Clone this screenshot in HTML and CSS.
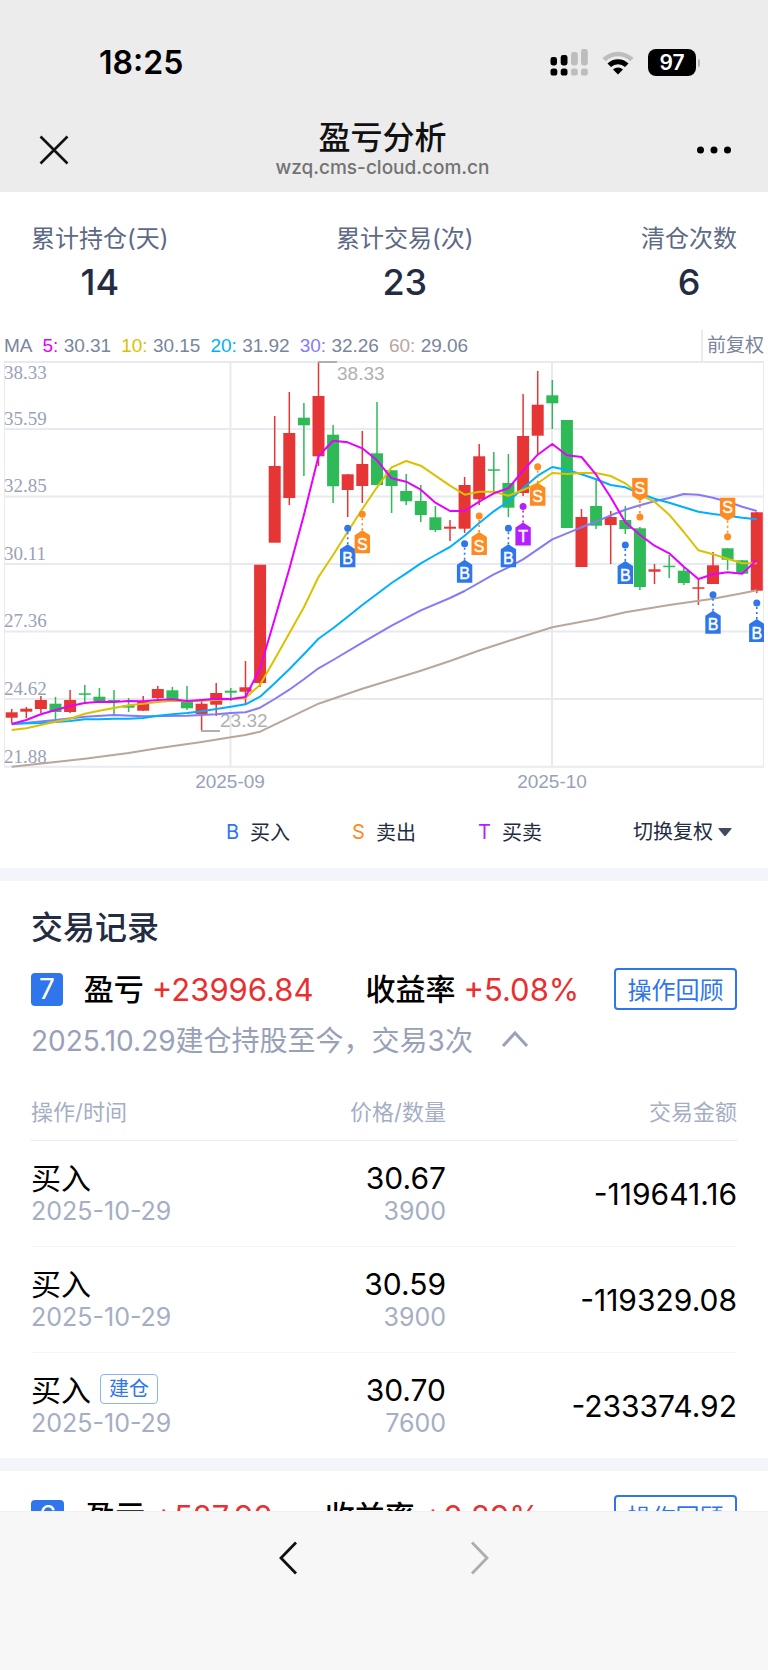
FILE: index.html
```
<!DOCTYPE html>
<html lang="zh-CN">
<head>
    <meta charset="utf-8">
    <meta name="viewport" content="width=device-width, initial-scale=1">
    <title>盈亏分析</title>
    <link rel="stylesheet" href="styles.css">
</head>
<body>
    <header class="header">
        <div class="status-bar">
            <span class="time">18:25</span>
            <div class="status-icons">
                <svg width="40" height="28" viewBox="0 0 40 28">
                    <rect x="0.5" y="8" width="6.5" height="8.5" rx="2.4"/>
                    <rect x="10.7" y="6" width="6.8" height="10.5" rx="2.4"/>
                    <g fill="#bdbdbd">
                        <rect x="21" y="3" width="6.8" height="13.5" rx="2.4"/>
                        <rect x="31" y="0" width="6.8" height="16.5" rx="2.4"/>
                        <rect x="21" y="19.5" width="6.8" height="7" rx="2.6"/>
                        <rect x="31" y="19.5" width="6.8" height="7" rx="2.6"/>
                    </g>
                    <rect x="0.5" y="19.5" width="6.8" height="7" rx="2.6"/>
                    <rect x="10.7" y="19.5" width="6.8" height="7" rx="2.6"/>
                </svg>
                <svg width="32" height="24" viewBox="0 0 32 24">
                    <path d="M0.5 7 A22.5 22.5 0 0 1 31.5 7 L28.3 10.2 A18 18 0 0 0 3.7 10.2 Z" fill="#bdbdbd"/>
                    <path d="M5.5 12.5 A15 15 0 0 1 26.5 12.5 L23 16 A10 10 0 0 0 9 16 Z"/>
                    <path d="M11 18.5 A7.4 7.4 0 0 1 21 18.5 L16 23.6 Z"/>
                </svg>
                <div class="battery"><span class="battery-level">97</span></div>
            </div>
        </div>
        <div class="nav-bar">
            <button class="icon-button" aria-label="关闭">
                <svg width="30" height="30" viewBox="0 0 30 30"><path d="M1.5 1.5 L28.5 28.5 M28.5 1.5 L1.5 28.5" fill="none" stroke="#111" stroke-width="2.6"/></svg>
            </button>
            <div class="nav-title">
                <h1>盈亏分析</h1>
                <p>wzq.cms-cloud.com.cn</p>
            </div>
            <button class="icon-button" aria-label="更多">
                <svg width="36" height="10" viewBox="0 0 36 10"><circle cx="4.5" cy="5" r="3.5"/><circle cx="18" cy="5" r="3.5"/><circle cx="31.5" cy="5" r="3.5"/></svg>
            </button>
        </div>
    </header>

    <main class="content">
        <section class="stats">
            <div class="stat"><span class="stat-label">累计持仓(天)</span><span class="stat-value">14</span></div>
            <div class="stat"><span class="stat-label">累计交易(次)</span><span class="stat-value">23</span></div>
            <div class="stat"><span class="stat-label">清仓次数</span><span class="stat-value">6</span></div>
        </section>

        <section class="chart">
            <div class="ma-row">
                <span>MA</span>
                <span><b class="ma5">5:</b> 30.31</span>
                <span><b class="ma10">10:</b> 30.15</span>
                <span><b class="ma20">20:</b> 31.92</span>
                <span><b class="ma30">30:</b> 32.26</span>
                <span><b class="ma60">60:</b> 29.06</span>
                <span class="adjust">前复权</span>
            </div>
            <svg id="kline" class="kline" viewBox="0 361 768 434"></svg>
            <div class="legend">
                <span class="legend-item"><i class="buy">B</i>买入</span>
                <span class="legend-item"><i class="sell">S</i>卖出</span>
                <span class="legend-item"><i class="both">T</i>买卖</span>
                <label class="switch">
                    <select aria-label="切换复权"><option>切换复权</option></select>
                    <svg width="14" height="8" viewBox="0 0 14 8"><path d="M1 0 H13 Q14 0 13.4 1 L8 7.4 Q7 8.4 6 7.4 L0.6 1 Q0 0 1 0 Z" fill="#404b60"/></svg>
                </label>
            </div>
        </section>

        <section class="records">
            <h2>交易记录</h2>
            <div class="record-head">
                <span class="badge">7</span>
                <span class="name">盈亏</span>
                <span class="profit">+23996.84</span>
                <span class="name rate">收益率</span>
                <span class="profit">+5.08%</span>
                <button class="review">操作回顾</button>
            </div>
            <button class="summary">
                <span>2025.10.29建仓持股至今，交易3次</span>
                <svg width="28" height="18" viewBox="0 0 28 18"><path d="M2 16 L14 3 L26 16" fill="none" stroke="#98a1b7" stroke-width="3"/></svg>
            </button>
            <table class="trades">
                <thead>
                    <tr><th class="col-op">操作/时间</th><th class="col-price">价格/数量</th><th class="col-amount">交易金额</th></tr>
                </thead>
                <tbody>
                    <tr>
                        <td><div class="main">买入</div><div class="sub">2025-10-29</div></td>
                        <td><div class="main">30.67</div><div class="sub">3900</div></td>
                        <td class="amount">-119641.16</td>
                    </tr>
                    <tr>
                        <td><div class="main">买入</div><div class="sub">2025-10-29</div></td>
                        <td><div class="main">30.59</div><div class="sub">3900</div></td>
                        <td class="amount">-119329.08</td>
                    </tr>
                    <tr>
                        <td><div class="main">买入<span class="tag">建仓</span></div><div class="sub">2025-10-29</div></td>
                        <td><div class="main">30.70</div><div class="sub">7600</div></td>
                        <td class="amount">-233374.92</td>
                    </tr>
                </tbody>
            </table>
        </section>

        <section class="records next">
            <div class="record-head">
                <span class="badge">6</span>
                <span class="name">盈亏</span>
                <span class="profit">+527.90</span>
                <span class="name rate">收益率</span>
                <span class="profit">+0.29%</span>
                <button class="review">操作回顾</button>
            </div>
        </section>
    </main>

    <footer class="toolbar">
        <button class="icon-button" aria-label="后退">
            <svg width="20" height="34" viewBox="0 0 20 34"><path d="M18 1.5 L3 17 L18 32.5" fill="none" stroke="#111" stroke-width="2.8"/></svg>
        </button>
        <button class="icon-button" aria-label="前进">
            <svg width="20" height="34" viewBox="0 0 20 34"><path d="M2 1.5 L17 17 L2 32.5" fill="none" stroke="#adadad" stroke-width="2.8"/></svg>
        </button>
    </footer>

    <script src="kline.js"></script>
</body>
</html>
```

FILE: styles.css
```
* {
    box-sizing: border-box;
}

body {
    margin: 0;
    height: 100vh;
    display: flex;
    flex-direction: column;
    background: #fff;
    color: #000;
    font-family: Inter, "Noto Sans CJK SC", sans-serif;
}

h1, h2, p {
    margin: 0;
}

button {
    padding: 0;
    border: none;
    background: none;
    font-family: inherit;
    cursor: pointer;
}

svg {
    display: block;
}

/* header */
.header {
    flex: none;
    height: 192px;
    background: #ececec;
}

.status-bar {
    display: flex;
    justify-content: space-between;
    align-items: center;
    height: 125px;
    padding: 0 68px 0 99px;
}

.time {
    font-size: 32px;
    font-weight: 600;
}

.status-icons {
    display: flex;
    align-items: center;
    gap: 12px;
}

.battery {
    display: flex;
    align-items: center;
    gap: 2px;
    padding-left: 2px;
}

.battery-level {
    width: 48px;
    height: 27px;
    border-radius: 8px;
    background: #000;
    color: #fff;
    font-size: 21px;
    line-height: 27px;
    font-weight: 600;
    text-align: center;
}

.battery::after {
    content: "";
    width: 2px;
    height: 8px;
    border-radius: 0 2px 2px 0;
    background: #b5b5b5;
}

.nav-bar {
    display: flex;
    justify-content: space-between;
    align-items: center;
    height: 50px;
    padding: 0 36px 0 39px;
}

.nav-title {
    text-align: center;
}

.nav-title h1 {
    font-size: 32px;
    line-height: 36px;
    font-weight: 500;
    color: #111;
}

.nav-title p {
    font-size: 19px;
    line-height: 24px;
    font-weight: 500;
    color: #737373;
}

/* scrolling content */
.content {
    flex: 1;
    min-height: 0;
    overflow-y: auto;
    scrollbar-width: none;
}

.stats {
    display: flex;
    justify-content: space-between;
    padding: 29px 31px 0;
}

.stat {
    display: flex;
    flex-direction: column;
    align-items: center;
}

.stat-label {
    font-size: 24px;
    line-height: 36px;
    color: #5d6985;
}

.stat-value {
    font-size: 36px;
    line-height: 50px;
    font-weight: 500;
    color: #232c41;
}

/* chart */
.chart {
    border-bottom: 13px solid #f4f5fa;
}

.ma-row {
    display: flex;
    align-items: center;
    gap: 10px;
    height: 31px;
    margin-top: 23px;
    padding: 0 4px;
    font-family: "Liberation Sans", "Noto Sans CJK SC", sans-serif;
    font-size: 19px;
    line-height: 31px;
    color: #7a859d;
}

.ma-row b {
    font-weight: normal;
}

.ma-row .ma5 { color: #e600ff; }
.ma-row .ma10 { color: #dcc100; }
.ma-row .ma20 { color: #00b0ff; }
.ma-row .ma30 { color: #857bf8; }
.ma-row .ma60 { color: #b9a69d; }

.adjust {
    margin-left: auto;
    padding-left: 4px;
    border-left: 2px solid #e9eaf0;
}

.kline {
    width: 100%;
}

.kline .axis {
    font: 19px "Liberation Serif", serif;
    fill: #98a2b8;
}

.kline .date,
.kline .extreme {
    font: 19px "Liberation Sans", sans-serif;
    fill: #98a2b8;
}

.kline .date {
    text-anchor: middle;
}

.kline .extreme {
    fill: #b0b0b0;
}

.kline .flag {
    font: 16px "Liberation Sans", sans-serif;
    fill: #fff;
    stroke: #fff;
    stroke-width: 0.4px;
    text-anchor: middle;
}

.legend {
    display: flex;
    justify-content: flex-end;
    align-items: center;
    gap: 62px;
    height: 73px;
    padding-right: 36px;
    font-size: 20px;
    color: #232c41;
}

.legend-item {
    display: flex;
    align-items: center;
}

.legend-item i {
    width: 24px;
    font-style: normal;
}

.buy { color: #2f76ec; }
.sell { color: #ff8a1f; }
.both { color: #b41fff; }

.switch {
    display: flex;
    align-items: center;
    gap: 5px;
    margin-left: 29px;
}

.switch select {
    appearance: none;
    padding: 0;
    border: none;
    background: none;
    font: inherit;
    color: inherit;
}

/* records */
.records {
    padding: 24px 31px 0;
}

.records h2 {
    font-size: 32px;
    line-height: 46px;
    font-weight: 500;
    color: #232c41;
}

.record-head {
    display: flex;
    align-items: center;
    height: 42px;
    font-size: 30px;
    line-height: 42px;
}

.records h2 + .record-head {
    margin-top: 17px;
}

.badge {
    padding: 0 8px;
    border-radius: 4px;
    background: #2f76ec;
    color: #fff;
    font-size: 28px;
    line-height: 33px;
}

.name {
    margin-left: 21px;
    font-weight: 500;
}

.name.rate {
    margin-left: 52px;
}

.profit {
    margin-left: 8px;
    padding-top: 2px;
    font-size: 31px;
    line-height: 42px;
    color: #e93030;
}

.review {
    width: 123px;
    height: 42px;
    padding-bottom: 2px;
    margin-left: auto;
    border: 2px solid #2f76ec;
    border-radius: 4px;
    font-size: 24px;
    color: #2f76ec;
}

.summary {
    display: flex;
    align-items: center;
    gap: 28px;
    height: 58px;
    font-size: 28px;
    color: #98a1b7;
}

.trades {
    width: 100%;
    table-layout: fixed;
    border-collapse: collapse;
    margin-top: 14px;
}

.trades th {
    height: 58px;
    padding: 0 0 2px;
    font-size: 22px;
    font-weight: normal;
    color: #a5aec4;
    text-align: right;
    border-bottom: 1px solid #ebecf0;
}

.trades td {
    height: 106px;
    padding: 2px 0 0;
    text-align: right;
    border-bottom: 1px solid #f5f5f7;
}

.trades tr:last-child td {
    border-bottom: none;
}

.trades th:first-child,
.trades td:first-child {
    text-align: left;
}

.trades .col-price {
    width: 150px;
}

.trades .col-amount {
    width: 291px;
}

.main {
    font-size: 30px;
    line-height: 34px;
}

.sub {
    font-size: 25px;
    line-height: 32px;
    color: #a5aec4;
}

.trades .amount {
    font-size: 30px;
}

.tag {
    display: inline-block;
    margin: 1px 0 0 9px;
    padding: 0 8px;
    border: 1px solid #8bb3f7;
    border-radius: 4px;
    font-size: 20px;
    line-height: 28px;
    vertical-align: top;
    color: #2f76ec;
}

.next {
    border-top: 13px solid #f4f5fa;
}

/* toolbar */
.toolbar {
    flex: none;
    display: flex;
    justify-content: center;
    align-items: flex-start;
    gap: 172px;
    height: 159px;
    padding-top: 29px;
    background: #f7f7f7;
    border-top: 1px solid #f0f0f0;
}
```

FILE: kline.js
```
var RED = '#e63535', GREEN = '#2dba57';
var FIRST = 11.7, STEP = 14.61;

// [up?, high, body top, body bottom, low]
var candles = [
    [1, 709, 712.3, 717.7, 723], [1, 707, 708.7, 711.7, 718], [1, 696, 700, 709, 713],
    [0, 697, 703.7, 712, 719], [1, 690, 700, 712, 713], [0, 685, 693.3, 694.7, 702],
    [0, 688, 696.7, 701, 702], [0, 690, 700, 701, 714], [0, 698, 705, 707.7, 712],
    [1, 696, 701.3, 710.7, 711], [1, 686, 689, 698, 699], [0, 687, 690.3, 699, 700],
    [0, 686, 702, 708.3, 710], [1, 700, 703.7, 714, 731], [1, 683, 693, 704.7, 716],
    [0, 688, 690.7, 692.7, 701], [1, 661, 687.3, 691.7, 704], [1, 565, 564.7, 683, 687],
    [1, 416, 466, 542.7, 542], [1, 392, 433, 498, 505], [0, 403, 417.7, 425.3, 476],
    [1, 362, 396, 456.3, 466], [0, 425, 434.7, 486.3, 503], [1, 474, 474.3, 490, 517],
    [1, 431, 464, 486, 503], [0, 402, 453.3, 485, 485], [0, 470, 470.3, 486, 513],
    [0, 474, 491, 501.3, 505], [0, 485, 501, 515, 522], [0, 506, 517.3, 530, 532],
    [1, 520, 526.7, 528.7, 541], [1, 477, 485, 528.7, 533], [1, 444, 456.3, 499.3, 505],
    [0, 452, 469.3, 470.3, 491], [0, 454, 483, 507.7, 517], [1, 394, 436, 493, 496],
    [1, 371, 404.7, 435.7, 454], [0, 380, 395.3, 403.3, 429], [0, 420, 420, 528, 528],
    [1, 509, 517, 567, 567], [0, 478, 506, 525.7, 529], [1, 511, 517, 525, 564],
    [0, 506, 520, 529, 534], [0, 527, 528.3, 587, 590], [1, 564, 569.3, 571.7, 584],
    [0, 555, 565.7, 566.7, 578], [0, 567, 570.7, 583, 585], [1, 579, 587.3, 588, 605],
    [1, 552, 565.3, 584, 584], [0, 548, 548.3, 559.7, 570], [0, 560, 560.3, 573.7, 574],
    [1, 512, 512.3, 590.7, 593]
];

// [color, [index, y], ...]
var averages = [
    ['#b9a69d', [[0, 766.7], [3, 762], [5, 758.7], [8, 753], [10, 748.3], [13, 742], [15, 737.3], [16, 735],
        [17, 731.7], [19, 717.7], [21, 703.7], [24, 688.7], [26, 679.7], [28, 670.7], [30, 661], [32, 650.5],
        [34, 641], [37, 627.3], [40, 619], [42, 612.3], [45, 605], [48, 598.7], [50, 593.3], [51, 590.3]]],
    ['#857bf8', [[0, 724.3], [3, 720], [5, 716.7], [7, 715], [9, 716.3], [12, 715.7], [14, 714.3], [15, 713],
        [16, 712.3], [17, 707.7], [18, 699], [19, 689.7], [20, 679.3], [21, 668.3], [22, 660], [24, 642.7],
        [26, 625.7], [28, 610.3], [30, 598], [31, 591], [33, 574.3], [34, 567.3], [35, 559.3], [36, 549.3],
        [37, 539.3], [38, 533.3], [39, 527.3], [40, 521.7], [41, 515.3], [42, 509.7], [43, 505.3], [44, 501.3],
        [45, 498], [46, 494], [47, 494.7], [48, 497.7], [49, 501.7], [50, 506.7], [51, 511]]],
    ['#00b0ff', [[0, 723.7], [2, 723], [3, 722], [4, 721], [5, 719.3], [6, 719.3], [7, 718.7], [8, 718.7],
        [9, 718], [10, 715.7], [11, 714.3], [12, 713], [13, 711.3], [14, 709], [15, 706.7], [16, 704.3],
        [17, 696.7], [18, 683.3], [19, 669.3], [20, 654.3], [21, 638.7], [22, 628.3], [23, 616.7], [24, 605],
        [25, 594], [26, 583], [27, 573.3], [28, 563.3], [29, 555], [30, 547], [31, 535.7], [32, 523],
        [33, 511.3], [34, 501.3], [35, 488.3], [36, 475.7], [37, 467], [38, 470], [39, 474.3], [40, 479.3],
        [41, 485], [42, 487.3], [43, 493.3], [44, 498.7], [45, 502.7], [46, 507.3], [47, 511.7], [48, 514],
        [49, 515.7], [50, 517.7], [51, 519.3]]],
    ['#dcc100', [[0, 730], [1, 728.3], [2, 725], [3, 721.7], [4, 718.7], [5, 713.7], [6, 710.7], [7, 708],
        [8, 705.3], [9, 703.7], [10, 702], [11, 700.7], [12, 701.3], [13, 700.7], [14, 700], [15, 699.3],
        [16, 698], [17, 684.7], [18, 659.3], [19, 633.3], [20, 607.3], [21, 577], [22, 555], [23, 531.7],
        [24, 509], [25, 487.3], [26, 467.3], [27, 461], [28, 465.7], [29, 475.7], [30, 485.7], [31, 494.7],
        [32, 491.7], [33, 491.7], [34, 495.7], [35, 490], [36, 483.3], [37, 473], [38, 474], [39, 473],
        [40, 473], [41, 476], [42, 483.3], [43, 495], [44, 501.7], [45, 514.7], [46, 532], [47, 550.3],
        [48, 554.3], [49, 558.7], [50, 563.3], [51, 563.3]]],
    ['#e600ff', [[0, 724], [1, 720], [2, 714.3], [3, 710], [4, 706], [5, 703], [6, 701.7], [7, 702], [8, 701],
        [9, 701.3], [10, 700], [11, 699.3], [12, 701], [13, 700], [14, 698.7], [15, 699], [16, 697],
        [17, 668.3], [18, 619], [19, 569], [20, 515], [21, 456.3], [22, 440.7], [23, 442.3], [24, 448.3],
        [25, 460.3], [26, 478.3], [27, 481.7], [28, 489.7], [29, 502.7], [30, 511], [31, 511], [32, 501.7],
        [33, 493.3], [34, 488.3], [35, 470.7], [36, 454.7], [37, 444], [38, 455.3], [39, 457], [40, 474.7],
        [41, 497.3], [42, 522.3], [43, 534.7], [44, 545.7], [45, 553.3], [46, 566.7], [47, 579], [48, 574.3],
        [49, 572.3], [50, 573.7], [51, 560]]]
];

// [index, type, dot y, direction of the flag]
var trades = [
    [23, 'B', 528.3, 1], [24, 'S', 514.3, 1], [31, 'B', 543.7, 1], [32, 'S', 516, 1],
    [34, 'B', 528.3, 1], [35, 'T', 506.5, 1], [36, 'S', 466.7, 1], [42, 'B', 545, 1],
    [43, 'S', 517, -1], [48, 'B', 594.7, 1], [49, 'S', 536.7, -1], [51, 'B', 603, 1]
];
var flagColors = { B: '#2f76ec', S: '#ff8a1f', T: '#b41fff' };

function x(i) {
    return Math.round((FIRST + STEP * i) * 10) / 10;
}

function line(x1, y1, x2, y2, color, width, dash) {
    return '<line x1="' + x1 + '" y1="' + y1 + '" x2="' + x2 + '" y2="' + y2 + '" stroke="' + color +
        '" stroke-width="' + width + '"' + (dash ? ' stroke-dasharray="' + dash + '"' : '') + '/>';
}

function text(px, py, cls, value) {
    return '<text x="' + px + '" y="' + py + '" class="' + cls + '">' + value + '</text>';
}

var out = '';

// grid
[362, 429, 496.5, 564, 631.5, 699, 766.7].forEach(function (y) {
    out += line(4, y, 764, y, '#e9eaf0', 2);
});
out += line(4.5, 362, 4.5, 767, '#e9eaf0', 1) + line(763.5, 362, 763.5, 767, '#e9eaf0', 1);
out += line(230.5, 362, 230.5, 767, '#e9eaf0', 2) + line(552, 362, 552, 767, '#e9eaf0', 2);

// candles
candles.forEach(function (c, i) {
    var color = c[0] ? RED : GREEN;
    out += line(x(i), c[1], x(i), c[4], color, 1.5);
    out += '<rect x="' + (x(i) - 6) + '" y="' + c[2] + '" width="12" height="' + Math.max(1.5, c[3] - c[2]) +
        '" fill="' + color + '"/>';
});

// labels
var labels = [['38.33', 379], ['35.59', 425], ['32.85', 492], ['30.11', 560], ['27.36', 627], ['24.62', 695], ['21.88', 763]];
labels.forEach(function (l) {
    out += text(4, l[1], 'axis', l[0]);
});
out += line(318, 362, 337, 362, '#b0b0b0', 2) + text(337, 380, 'extreme', '38.33');
out += line(201, 731, 220, 731, '#b0b0b0', 2) + text(220, 727, 'extreme', '23.32');
out += text(230, 788, 'date', '2025-09') + text(552, 788, 'date', '2025-10');

// moving averages
averages.forEach(function (a) {
    var points = a[1].map(function (p) { return x(p[0]) + ',' + p[1]; }).join(' ');
    out += '<polyline points="' + points + '" fill="none" stroke="' + a[0] + '" stroke-width="2" stroke-linejoin="round"/>';
});

// trade flags
out += '<clipPath id="plot"><rect x="4" y="361" width="760" height="406"/></clipPath><g clip-path="url(#plot)">';
trades.forEach(function (t) {
    var cx = x(t[0]), y = t[2], d = t[3], color = flagColors[t[1]];
    out += line(cx, y + 4 * d, cx, y + 17 * d, color, 1.6, '2 3');
    out += '<circle cx="' + cx + '" cy="' + y + '" r="3.5" fill="' + color + '"/>';
    out += '<path d="M' + cx + ' ' + (y + 16 * d) + ' L' + (cx + 7.7) + ' ' + (y + 21 * d) + ' V' + (y + 39 * d) +
        ' H' + (cx - 7.7) + ' V' + (y + 21 * d) + ' Z" fill="' + color + '"/>';
    out += text(cx, y + 29.5 * d + 6, 'flag', t[1]);
});
out += '</g>';

document.getElementById('kline').innerHTML = out;
```
